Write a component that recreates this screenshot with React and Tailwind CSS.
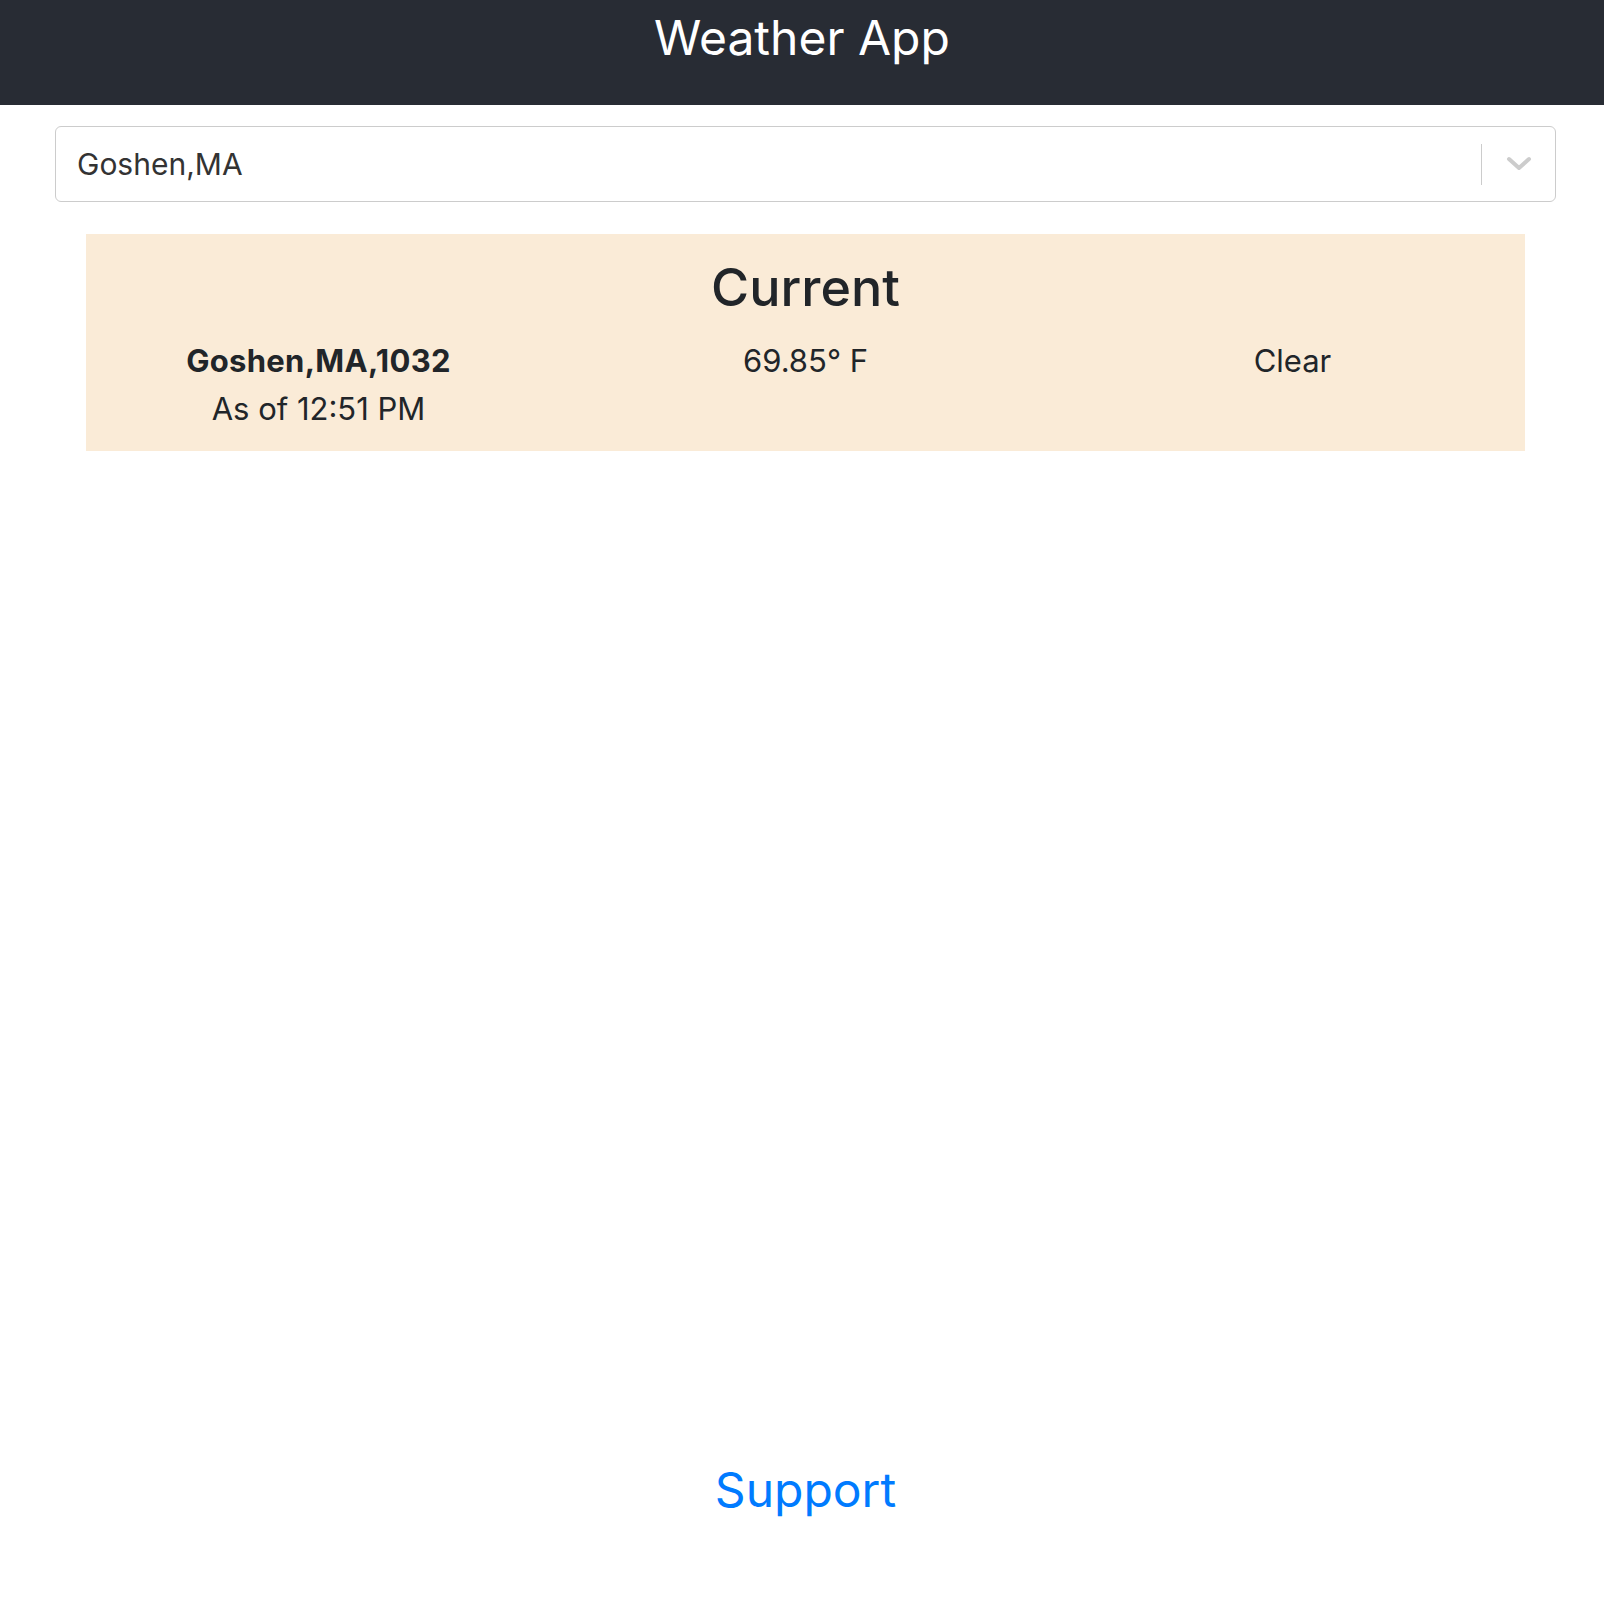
export default function App() {
  const font = { fontFamily: "Inter, 'Noto Sans', sans-serif" };
  return (
    <div className="min-h-screen flex flex-col bg-white text-[#212529]" style={font}>
      {/* Header */}
      <header className="h-[105px] bg-[#282c34] text-white text-center">
        <h1 className="pt-[8px] text-[48px] leading-[60px] font-normal">Weather App</h1>
      </header>

      <main className="flex-1">
        {/* City select */}
        <div className="mt-[21px] ml-[55px] mr-[48px] h-[76px] border border-[#cccccc] rounded-[6px] flex items-center">
          <div className="flex-1 pl-[21px] text-[30px] text-[#333333]">Goshen,MA</div>
          <div className="w-px h-[41px] bg-[#cccccc]"></div>
          <div className="w-[73px] flex justify-center">
            <svg width="28" height="18" viewBox="0 0 28 18" fill="none">
              <polyline points="4,4 14,13 24,4" stroke="#cccccc" strokeWidth="4" strokeLinecap="round" strokeLinejoin="round" />
            </svg>
          </div>
        </div>

        {/* Current weather card */}
        <div className="mt-[32px] ml-[86px] mr-[79px] bg-[#faebd7] pt-[24px] pb-[18px] overflow-hidden">
          <h2 className="text-center text-[52px] leading-[60px] font-medium">Current</h2>
          <div className="mt-[19px] -mx-[11px] grid grid-cols-3 text-center text-[31px] leading-[48px]">
            <div>
              <div className="font-bold tracking-[0.3px]">Goshen,MA,1032</div>
              <div>As of 12:51 PM</div>
            </div>
            <div>69.85° F</div>
            <div>Clear</div>
          </div>
        </div>
      </main>

      <footer className="pb-[94px] text-center pl-[7px]">
        <a href="#" className="text-[48px] leading-[60px] text-[#007bff]">Support</a>
      </footer>
    </div>
  );
}
